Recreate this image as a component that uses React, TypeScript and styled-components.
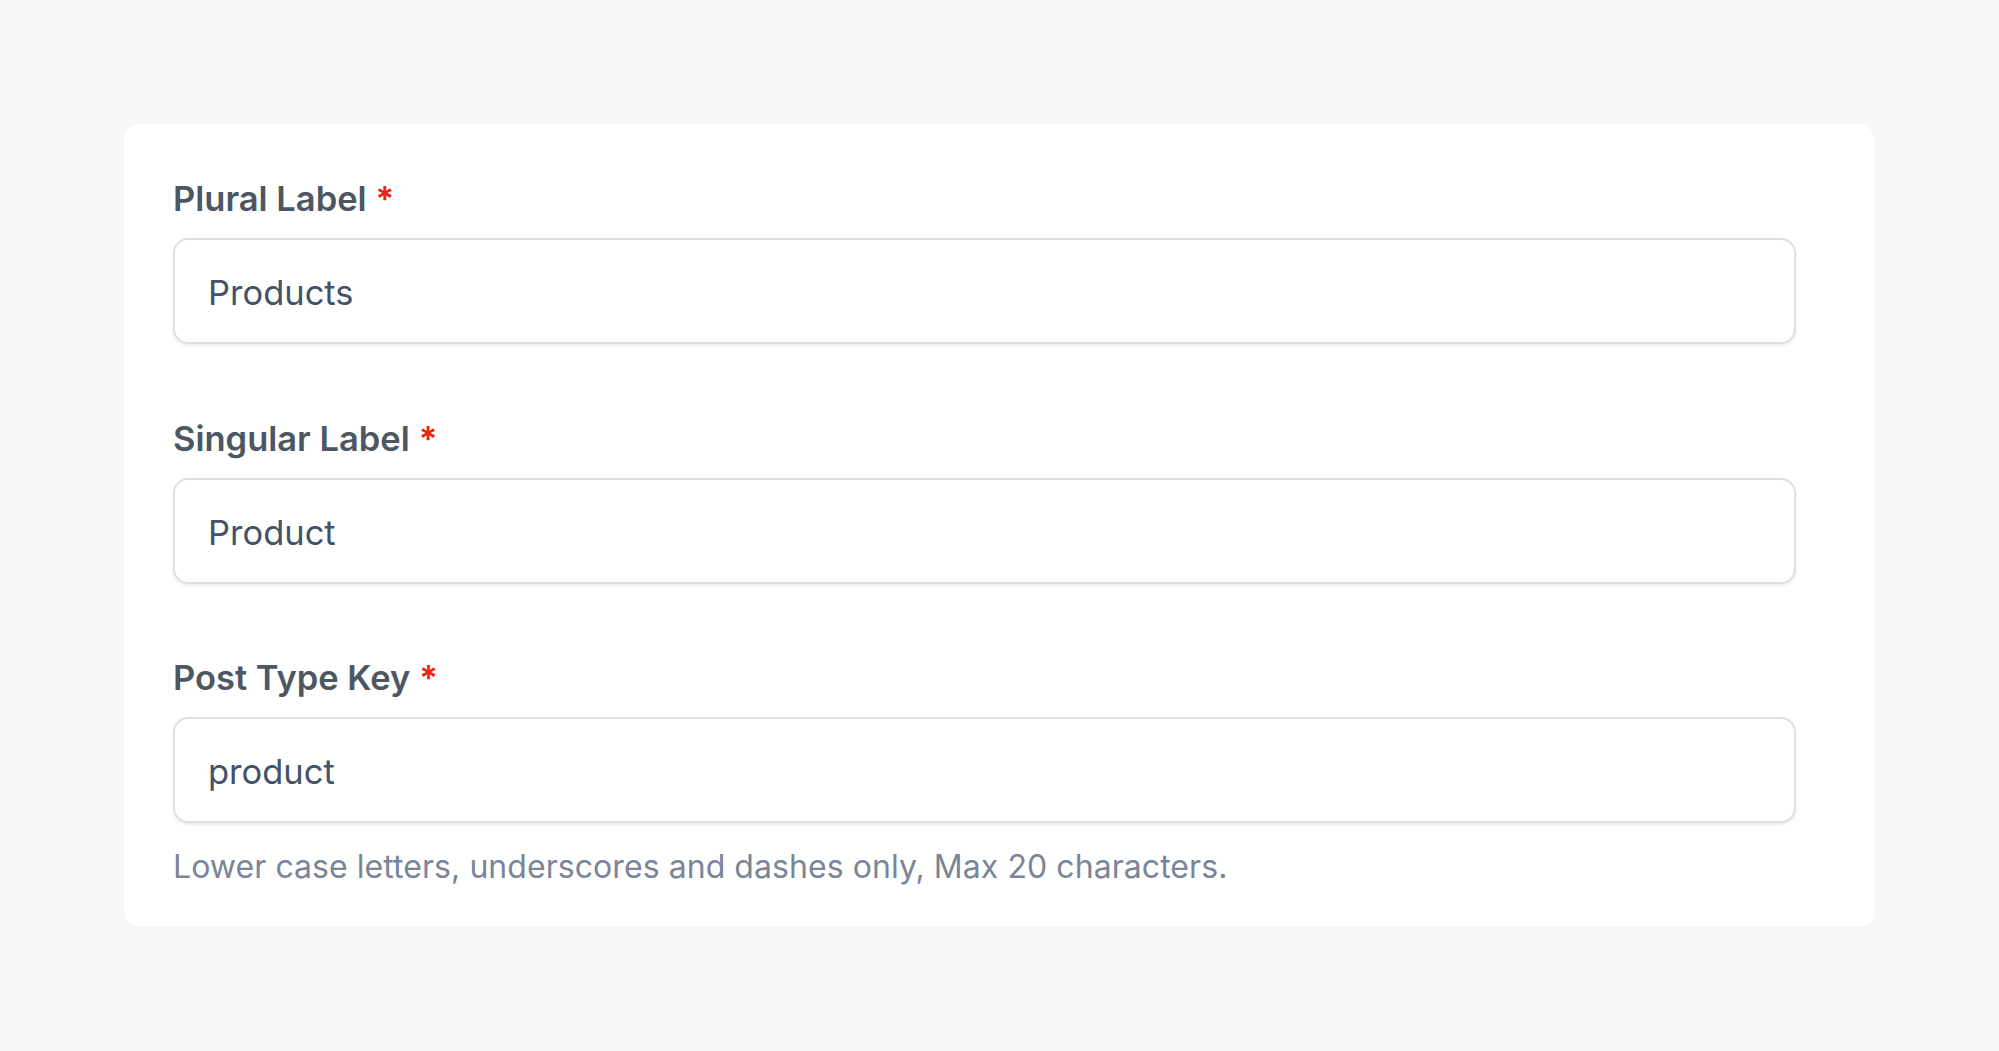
import styled, { createGlobalStyle } from "styled-components";

const GlobalStyle = createGlobalStyle`
  html, body {
    margin: 0;
    padding: 0;
    background-color: #f6f7f9;
    font-family: Inter, "Noto Sans", sans-serif;
  }
  * {
    box-sizing: border-box;
  }
`;

interface Field {
  id: string;
  label: string;
  value: string;
  required: boolean;
  hint?: string;
}

const fields: Field[] = [
  { id: "plural", label: "Plural Label", value: "Products", required: true },
  { id: "singular", label: "Singular Label", value: "Product", required: true },
  {
    id: "key",
    label: "Post Type Key",
    value: "product",
    required: true,
    hint: "Lower case letters, underscores and dashes only, Max 20 characters.",
  },
];

const App = () => {
  return (
    <Page>
      <GlobalStyle />
      <Card>
        {fields.map((field) => (
          <FieldGroup key={field.id}>
            <Label htmlFor={field.id}>
              {field.label}
              {field.required && <Required>*</Required>}
            </Label>
            <Input id={field.id} defaultValue={field.value} />
            {field.hint && <Hint>{field.hint}</Hint>}
          </FieldGroup>
        ))}
      </Card>
    </Page>
  );
};

const Page = styled.div`
  min-height: 100vh;
  padding: 124px 125px 124px 124px;
`;

const Card = styled.div`
  background-color: #ffffff;
  border-radius: 15px;
  padding: 51px 78px 40px 49px;
  display: flex;
  flex-direction: column;
  gap: 70.5px;
`;

const FieldGroup = styled.div`
  display: flex;
  flex-direction: column;
`;

const Label = styled.label`
  font-size: 34.5px;
  line-height: 48px;
  font-weight: 600;
  color: #4d5762;
  margin-bottom: 15px;
`;

const Required = styled.span`
  color: #f0210f;
  margin-left: 9px;
`;

const Input = styled.input`
  height: 106px;
  width: 100%;
  border: 2px solid #dcdfe6;
  border-radius: 15px;
  box-shadow: 0 2px 3px rgba(30, 40, 60, 0.08);
  padding: 3px 33px 0;
  font-family: Inter, "Noto Sans", sans-serif;
  font-size: 34.5px;
  color: #425368;
  background-color: #ffffff;
  outline: none;
`;

const Hint = styled.p`
  margin: 24px 0 0;
  font-size: 32px;
  line-height: 40px;
  letter-spacing: 0.06px;
  color: #7a8598;
`;

export default App;
